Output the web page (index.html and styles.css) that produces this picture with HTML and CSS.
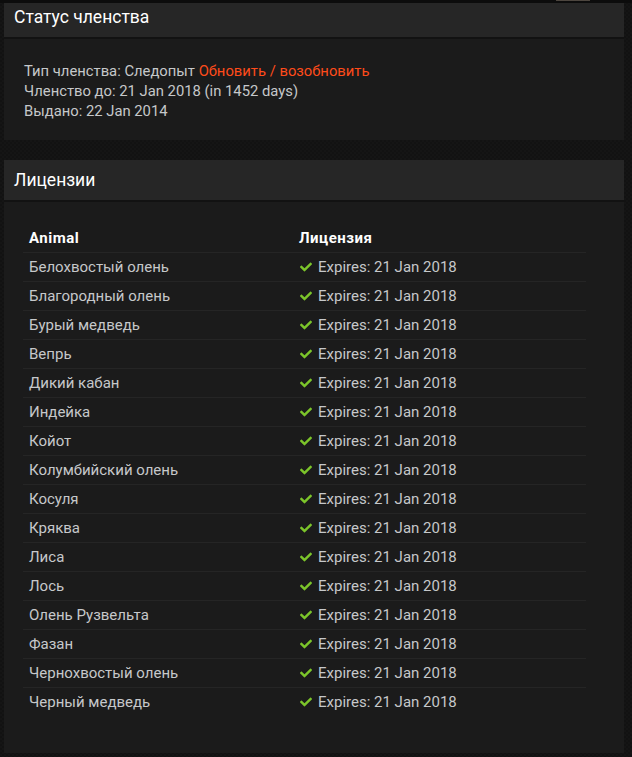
FILE: index.html
```html
<!DOCTYPE html>
<html lang="ru">
<head>
<meta charset="utf-8">
<title>Статус членства</title>
<link rel="stylesheet" href="styles.css">
</head>
<body>
<div class="topbar"><span class="topbar-tab"></span></div>
<main class="page">
  <section class="panel">
    <h2 class="panel-title">Статус членства</h2>
    <div class="panel-body status">
      <p>Тип членства: Следопыт <a class="renew" href="#">Обновить / возобновить</a></p>
      <p>Членство до: 21 Jan 2018 (in 1452 days)</p>
      <p>Выдано: 22 Jan 2014</p>
    </div>
  </section>

  <section class="panel">
    <h2 class="panel-title">Лицензии</h2>
    <div class="panel-body licenses">
      <table class="license-table">
        <thead>
          <tr><th class="col-animal">Animal</th><th>Лицензия</th></tr>
        </thead>
        <tbody>
          <tr><td>Белохвостый олень</td><td><svg class="check" viewBox="0 0 512 512"><path d="M173.9 439.4l-166.4-166.4c-10-10-10-26.2 0-36.2l36.2-36.2c10-10 26.2-10 36.2 0L192 312.7 432.1 72.6c10-10 26.2-10 36.2 0l36.2 36.2c10 10 10 26.2 0 36.2l-294.4 294.4c-10 10-26.2 10-36.2 0z"/></svg>Expires: 21 Jan 2018</td></tr>
          <tr><td>Благородный олень</td><td><svg class="check" viewBox="0 0 512 512"><path d="M173.9 439.4l-166.4-166.4c-10-10-10-26.2 0-36.2l36.2-36.2c10-10 26.2-10 36.2 0L192 312.7 432.1 72.6c10-10 26.2-10 36.2 0l36.2 36.2c10 10 10 26.2 0 36.2l-294.4 294.4c-10 10-26.2 10-36.2 0z"/></svg>Expires: 21 Jan 2018</td></tr>
          <tr><td>Бурый медведь</td><td><svg class="check" viewBox="0 0 512 512"><path d="M173.9 439.4l-166.4-166.4c-10-10-10-26.2 0-36.2l36.2-36.2c10-10 26.2-10 36.2 0L192 312.7 432.1 72.6c10-10 26.2-10 36.2 0l36.2 36.2c10 10 10 26.2 0 36.2l-294.4 294.4c-10 10-26.2 10-36.2 0z"/></svg>Expires: 21 Jan 2018</td></tr>
          <tr><td>Вепрь</td><td><svg class="check" viewBox="0 0 512 512"><path d="M173.9 439.4l-166.4-166.4c-10-10-10-26.2 0-36.2l36.2-36.2c10-10 26.2-10 36.2 0L192 312.7 432.1 72.6c10-10 26.2-10 36.2 0l36.2 36.2c10 10 10 26.2 0 36.2l-294.4 294.4c-10 10-26.2 10-36.2 0z"/></svg>Expires: 21 Jan 2018</td></tr>
          <tr><td>Дикий кабан</td><td><svg class="check" viewBox="0 0 512 512"><path d="M173.9 439.4l-166.4-166.4c-10-10-10-26.2 0-36.2l36.2-36.2c10-10 26.2-10 36.2 0L192 312.7 432.1 72.6c10-10 26.2-10 36.2 0l36.2 36.2c10 10 10 26.2 0 36.2l-294.4 294.4c-10 10-26.2 10-36.2 0z"/></svg>Expires: 21 Jan 2018</td></tr>
          <tr><td>Индейка</td><td><svg class="check" viewBox="0 0 512 512"><path d="M173.9 439.4l-166.4-166.4c-10-10-10-26.2 0-36.2l36.2-36.2c10-10 26.2-10 36.2 0L192 312.7 432.1 72.6c10-10 26.2-10 36.2 0l36.2 36.2c10 10 10 26.2 0 36.2l-294.4 294.4c-10 10-26.2 10-36.2 0z"/></svg>Expires: 21 Jan 2018</td></tr>
          <tr><td>Койот</td><td><svg class="check" viewBox="0 0 512 512"><path d="M173.9 439.4l-166.4-166.4c-10-10-10-26.2 0-36.2l36.2-36.2c10-10 26.2-10 36.2 0L192 312.7 432.1 72.6c10-10 26.2-10 36.2 0l36.2 36.2c10 10 10 26.2 0 36.2l-294.4 294.4c-10 10-26.2 10-36.2 0z"/></svg>Expires: 21 Jan 2018</td></tr>
          <tr><td>Колумбийский олень</td><td><svg class="check" viewBox="0 0 512 512"><path d="M173.9 439.4l-166.4-166.4c-10-10-10-26.2 0-36.2l36.2-36.2c10-10 26.2-10 36.2 0L192 312.7 432.1 72.6c10-10 26.2-10 36.2 0l36.2 36.2c10 10 10 26.2 0 36.2l-294.4 294.4c-10 10-26.2 10-36.2 0z"/></svg>Expires: 21 Jan 2018</td></tr>
          <tr><td>Косуля</td><td><svg class="check" viewBox="0 0 512 512"><path d="M173.9 439.4l-166.4-166.4c-10-10-10-26.2 0-36.2l36.2-36.2c10-10 26.2-10 36.2 0L192 312.7 432.1 72.6c10-10 26.2-10 36.2 0l36.2 36.2c10 10 10 26.2 0 36.2l-294.4 294.4c-10 10-26.2 10-36.2 0z"/></svg>Expires: 21 Jan 2018</td></tr>
          <tr><td>Кряква</td><td><svg class="check" viewBox="0 0 512 512"><path d="M173.9 439.4l-166.4-166.4c-10-10-10-26.2 0-36.2l36.2-36.2c10-10 26.2-10 36.2 0L192 312.7 432.1 72.6c10-10 26.2-10 36.2 0l36.2 36.2c10 10 10 26.2 0 36.2l-294.4 294.4c-10 10-26.2 10-36.2 0z"/></svg>Expires: 21 Jan 2018</td></tr>
          <tr><td>Лиса</td><td><svg class="check" viewBox="0 0 512 512"><path d="M173.9 439.4l-166.4-166.4c-10-10-10-26.2 0-36.2l36.2-36.2c10-10 26.2-10 36.2 0L192 312.7 432.1 72.6c10-10 26.2-10 36.2 0l36.2 36.2c10 10 10 26.2 0 36.2l-294.4 294.4c-10 10-26.2 10-36.2 0z"/></svg>Expires: 21 Jan 2018</td></tr>
          <tr><td>Лось</td><td><svg class="check" viewBox="0 0 512 512"><path d="M173.9 439.4l-166.4-166.4c-10-10-10-26.2 0-36.2l36.2-36.2c10-10 26.2-10 36.2 0L192 312.7 432.1 72.6c10-10 26.2-10 36.2 0l36.2 36.2c10 10 10 26.2 0 36.2l-294.4 294.4c-10 10-26.2 10-36.2 0z"/></svg>Expires: 21 Jan 2018</td></tr>
          <tr><td>Олень Рузвельта</td><td><svg class="check" viewBox="0 0 512 512"><path d="M173.9 439.4l-166.4-166.4c-10-10-10-26.2 0-36.2l36.2-36.2c10-10 26.2-10 36.2 0L192 312.7 432.1 72.6c10-10 26.2-10 36.2 0l36.2 36.2c10 10 10 26.2 0 36.2l-294.4 294.4c-10 10-26.2 10-36.2 0z"/></svg>Expires: 21 Jan 2018</td></tr>
          <tr><td>Фазан</td><td><svg class="check" viewBox="0 0 512 512"><path d="M173.9 439.4l-166.4-166.4c-10-10-10-26.2 0-36.2l36.2-36.2c10-10 26.2-10 36.2 0L192 312.7 432.1 72.6c10-10 26.2-10 36.2 0l36.2 36.2c10 10 10 26.2 0 36.2l-294.4 294.4c-10 10-26.2 10-36.2 0z"/></svg>Expires: 21 Jan 2018</td></tr>
          <tr><td>Чернохвостый олень</td><td><svg class="check" viewBox="0 0 512 512"><path d="M173.9 439.4l-166.4-166.4c-10-10-10-26.2 0-36.2l36.2-36.2c10-10 26.2-10 36.2 0L192 312.7 432.1 72.6c10-10 26.2-10 36.2 0l36.2 36.2c10 10 10 26.2 0 36.2l-294.4 294.4c-10 10-26.2 10-36.2 0z"/></svg>Expires: 21 Jan 2018</td></tr>
          <tr><td>Черный медведь</td><td><svg class="check" viewBox="0 0 512 512"><path d="M173.9 439.4l-166.4-166.4c-10-10-10-26.2 0-36.2l36.2-36.2c10-10 26.2-10 36.2 0L192 312.7 432.1 72.6c10-10 26.2-10 36.2 0l36.2 36.2c10 10 10 26.2 0 36.2l-294.4 294.4c-10 10-26.2 10-36.2 0z"/></svg>Expires: 21 Jan 2018</td></tr>
        </tbody>
      </table>
    </div>
  </section>
</main>
</body>
</html>
```

FILE: styles.css
```css
* { box-sizing: border-box; }

html, body {
  margin: 0;
  padding: 0;
}

body {
  background-color: #141414;
  background-image: repeating-conic-gradient(#151515 0 25%, #121212 0 50%);
  background-size: 4px 4px;
  font-family: Roboto, "Noto Sans", sans-serif;
  font-size: 15px;
  color: #c6c8ca;
  height: 757px;
  overflow: hidden;
}

.topbar {
  position: fixed;
  top: 0;
  left: 0;
  right: 0;
  height: 3px;
  background: #0c0c0c;
  z-index: 5;
}

.topbar-tab {
  position: absolute;
  left: 556px;
  top: 0;
  width: 34px;
  height: 1px;
  background: #4d463f;
}

.page {
  margin-top: -3px;
  padding: 0 8px 0 4px;
  display: flex;
  flex-direction: column;
  gap: 20px;
}

.panel {
  background: #1b1b1b;
}

.panel-title {
  margin: 0;
  height: 42px;
  padding: 0 10px;
  background: #262626;
  border-bottom: 2px solid #121212;
  font-size: 17.5px;
  font-weight: 400;
  line-height: 41px;
  color: #ffffff;
}

.panel-body.status {
  padding: 22px 20px 19px;
  height: 101px;
  font-size: 14.8px;
}

.status p {
  margin: 0;
  line-height: 20px;
}

.renew {
  color: #ff4b1a;
  text-decoration: none;
}

.panel-body.licenses {
  padding: 22px 38px 36px 19px;
}

.license-table {
  width: 100%;
  border-collapse: collapse;
}

.license-table th,
.license-table td {
  padding: 0 6px;
  height: 28px;
  line-height: 28px;
  text-align: left;
  white-space: nowrap;
}

.license-table th {
  color: #ffffff;
  font-weight: 700;
  letter-spacing: 0.5px;
}

.license-table td {
  border-top: 1px solid #252525;
  height: 29px;
}

.col-animal {
  width: 270px;
}

.check {
  width: 14px;
  height: 12px;
  fill: #7cc52a;
  vertical-align: -1px;
  margin-right: 5px;
}
```
